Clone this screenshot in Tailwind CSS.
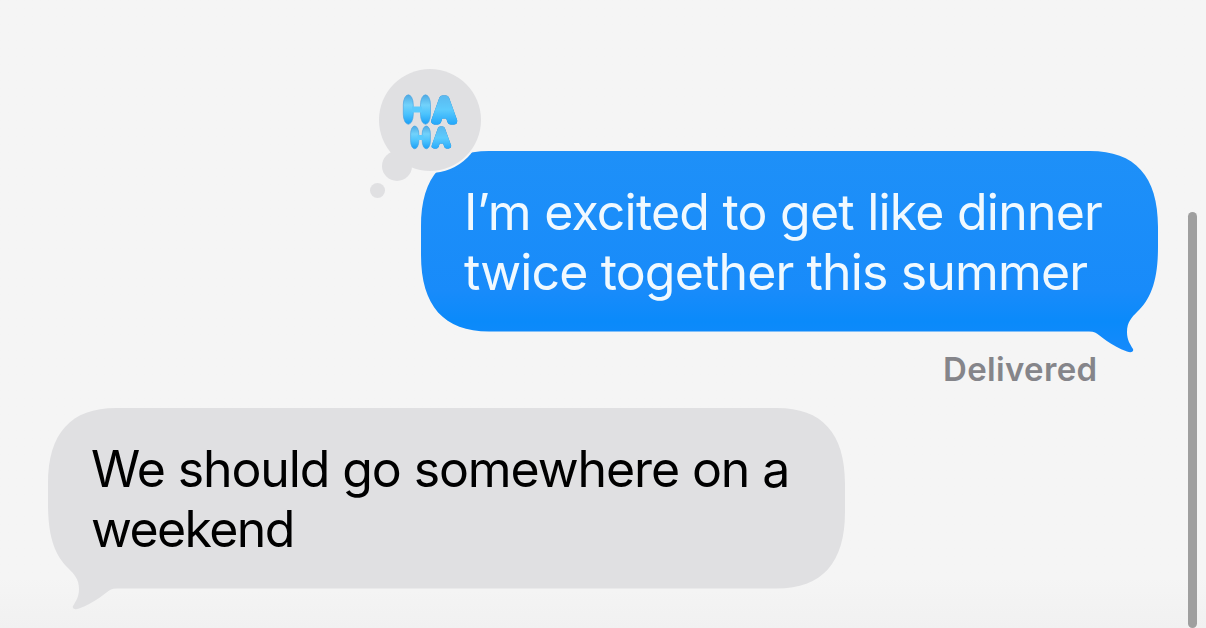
<!DOCTYPE html>
<html lang="en">
<head>
<meta charset="UTF-8">
<meta name="viewport" content="width=device-width, initial-scale=1.0">
<title>Messages</title>
<script src="https://cdn.jsdelivr.net/npm/@tailwindcss/browser@4"></script>
</head>
<body class="relative h-screen overflow-hidden bg-linear-to-b from-[#f5f5f5] from-92% to-[#f1f1f1] font-['Inter',sans-serif]">

<main class="flex flex-col pt-[151px] pl-12 pr-12">

    <!-- sent message -->
    <div class="relative h-[180px] w-[737px] self-end pl-[43px] pt-[31px] text-[50px] leading-[60px] text-[#f0f9ff]">
        <svg class="absolute left-0 top-0 -z-10 overflow-visible" width="737" height="202" viewBox="0 0 737 202">
            <defs>
                <linearGradient id="sent" x1="0" y1="0" x2="0" y2="1">
                    <stop offset="0" stop-color="#1e90f8"/>
                    <stop offset="0.7" stop-color="#188bfa"/>
                    <stop offset="0.85" stop-color="#0a8afa"/>
                    <stop offset="1" stop-color="#168afc"/>
                </linearGradient>
            </defs>
            <path fill="url(#sent)" d="M68 0H669C714 0 737 25 737 76V96C737 129 730 148 716 161C711 166 706 171 706 181C706 189 709 193 712 198C713 201 710 202 706 200.500C690 195 679 184 674 181.500Q672 180.500 668 180.500H68C23 180.500 0 155 0 104V76C0 25 23 0 68 0Z"/>
        </svg>
        <p class="whitespace-nowrap tracking-[-0.78px]">I’m excited to get like dinner</p>
        <p class="whitespace-nowrap tracking-[-0.86px]">twice together this summer</p>

        <!-- haha reaction -->
        <svg class="absolute -left-[61px] -top-[91px]" width="140" height="150" viewBox="0 0 140 150">
            <defs>
                <linearGradient id="haha" x1="0" y1="0" x2="0" y2="1">
                    <stop offset="0.1" stop-color="#5bb9ef"/>
                    <stop offset="0.5" stop-color="#5ccbfd"/>
                    <stop offset="0.9" stop-color="#25a9fb"/>
                </linearGradient>
                <linearGradient id="puff" x1="0" y1="0" x2="0" y2="1">
                    <stop offset="0" stop-color="#4fa9e2"/>
                    <stop offset="0.35" stop-color="#72d2fb"/>
                    <stop offset="0.65" stop-color="#4cc3fd"/>
                    <stop offset="1" stop-color="#1c9ff6"/>
                </linearGradient>
            </defs>
            <circle cx="70" cy="60" r="53" fill="#f5f5f5"/>
            <g fill="#e0e0e2">
                <circle cx="70" cy="60" r="51"/>
                <circle cx="37" cy="106" r="15"/>
                <circle cx="17.500" cy="130.500" r="7.500"/>
            </g>
            <g class="drop-shadow-[0_0_0.5px_#1b7fc8]" fill="url(#haha)" stroke="url(#haha)" font-family="Inter, sans-serif" font-weight="400" stroke-linejoin="round">
                <text x="43.700" y="59" font-size="26" stroke-width="1.500" textLength="26.500" lengthAdjust="spacingAndGlyphs">H</text>
                <text x="74" y="60.500" font-size="30" stroke-width="7" textLength="20.500" lengthAdjust="spacingAndGlyphs">A</text>
                <text x="52" y="83" font-size="16" stroke-width="1.500" textLength="17" lengthAdjust="spacingAndGlyphs">H</text>
                <text x="73.500" y="86" font-size="23" stroke-width="4.800">A</text>
            </g>
            <!-- balloon shading over the stems -->
            <g fill="url(#puff)" stroke="#3c9fe3" stroke-width="0.600">
                <rect x="43.300" y="34.800" width="10" height="29.500" rx="5" ry="10"/>
                <rect x="60.500" y="34.800" width="10" height="29.500" rx="5" ry="10"/>
                <rect x="50.600" y="66" width="8.200" height="22.800" rx="4.100" ry="8"/>
                <rect x="62.200" y="66" width="8.200" height="22.800" rx="4.100" ry="8"/>
            </g>
            <g fill="#5acafd">
                <rect x="52" y="46.500" width="10" height="6" rx="1"/>
                <rect x="57.500" y="75" width="6" height="5"/>
            </g>
        </svg>
    </div>

    <p class="mr-[60.5px] mt-[18px] h-[59px] self-end text-[33px] leading-10 font-semibold tracking-[0.35px] text-[#85858a]">Delivered</p>

    <!-- received message -->
    <div class="relative h-[180px] w-[797px] pl-[43px] pt-[31px] text-[50px] leading-[60px] text-black">
        <svg class="absolute left-0 top-0 -z-10 overflow-visible" width="797" height="202" viewBox="0 0 797 202">
            <path fill="#e0e0e2" d="M729 0H68C23 0 0 25 0 76V96C0 129 7 148 21 161C26 166 31 171 31 181C31 189 28 193 25 198C24 201 27 202 31 200.500C47 195 58 184 63 181.500Q65 180.500 69 180.500H729C774 180.500 797 155 797 104V76C797 25 774 0 729 0Z"/>
        </svg>
        <p class="whitespace-nowrap tracking-[-1.1px]">We should go somewhere on a</p>
        <p class="whitespace-nowrap tracking-[-1.6px]">weekend</p>
    </div>
</main>

<!-- scrollbar -->
<div class="absolute right-[9px] top-[212px] h-[416px] w-[9px] rounded-full bg-[#9f9f9f]"></div>

</body>
</html>
